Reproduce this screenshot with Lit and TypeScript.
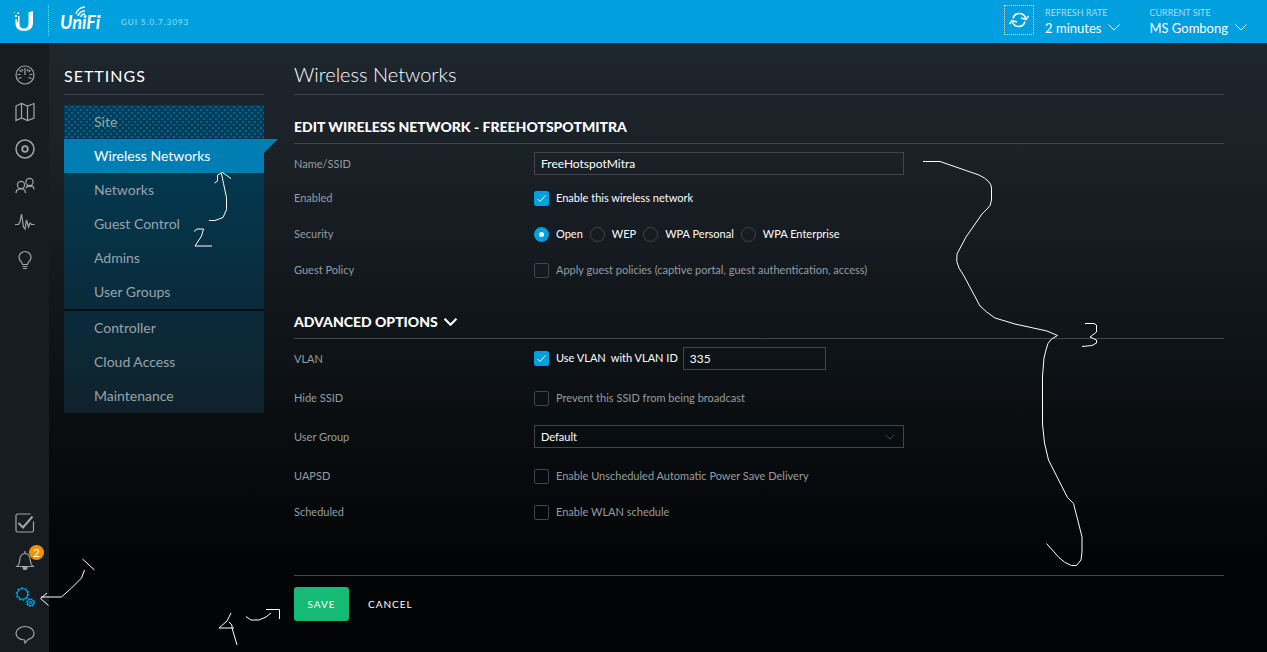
import { LitElement, html, css, svg, nothing } from "lit";
import { customElement, property, state } from "lit/decorators.js";
import { classMap } from "lit/directives/class-map.js";

const icons: Record<string, unknown> = {
  dashboard: svg`<circle cx="10" cy="10" r="9"/><path d="M10 3v7M4.500 5l2 2M15.500 5l-2 2M2.500 9.500h3M14.500 9.500h3M3.500 13.500l3-1M16.500 13.500l-3-1M7 4l.8 2M13 4l-.8 2"/>`,
  map: svg`<path d="M1 4l5.500-2.500 6 2.500 6.500-2.500V16l-6.500 2.500-6-2.500L1 18.500zM6.500 1.500V16M12.500 4v14.500"/>`,
  devices: svg`<circle cx="10" cy="10" r="9" stroke-width="1.500"/><circle cx="10" cy="10" r="2.800" stroke-width="1.800"/>`,
  clients: svg`<circle cx="6" cy="9" r="3.600"/><circle cx="14.500" cy="6" r="3.600"/><path d="M1 17c0-2 1-3.500 3-4M8 13c1.500.5 2.500 2 2.500 4M11 12.500c.5-2 1-2.500 2-3M16.500 9.500c1.500.5 2.500 2 2.500 4M3 13h6M12 10.500h6"/>`,
  pulse: svg`<path d="M0 11.500h3.500l1.500-3L6.500 1l2 13 1.500 2 1.500-9 2 7 1.500-4 1.500 1.500h3"/>`,
  insights: svg`<path d="M7.500 14.500c0-2.500-3.500-3.500-3.500-7a6 6 0 0 1 12 0c0 3.500-3.500 4.500-3.500 7zM7.500 16.500h5M8 18.500h4"/>`,
  tasks: svg`<path d="M18.500 8.500v9a1.500 1.500 0 0 1-1.500 1.500H2.500A1.500 1.500 0 0 1 1 17.500v-14A2 2 0 0 1 2.500 1h13"/><path d="M3.500 10l4.500 4.500 9.500-11" stroke-width="2"/>`,
  alerts: svg`<path d="M2 16.500c2-1.500 2.500-3 2.700-6C5 6 6.500 3.500 10 3.500s5 2.500 5.300 7c.2 3 .7 4.500 2.700 6zM10 1v2.500"/><path d="M8 17.500a2 2 0 0 0 4 0z" fill="currentColor"/>`,
  settings: svg`<circle cx="7.500" cy="7" r="5.300"/><circle cx="7.500" cy="7" r="6.300" stroke-dasharray="1.600 2.350"/><circle cx="15.500" cy="15.500" r="3"/><circle cx="15.500" cy="15.500" r="4" stroke-dasharray="1.500 1.640"/><circle cx="15.500" cy="15.500" r=".8"/>`,
  chat: svg`<path d="M9.500 16C4.500 15.800 1 13 1 9.300 1 5.500 5 2.500 10 2.500s9 3 9 6.800c0 3-2.500 5.400-6 6.400L10 19z"/>`,
};

const icon = (name: string) =>
  html`<svg class="icon" viewBox="0 0 20 20" aria-hidden="true">${icons[name]}</svg>`;

const chevron = (cls: string) =>
  html`<svg class=${cls} viewBox="0 0 12 7" aria-hidden="true"><path d="M.5 .5L6 6 11.500 .5" /></svg>`;

@customElement("unifi-header")
export class UnifiHeader extends LitElement {
  static styles = css`
    :host { display: block; }
    .bar {
      display: flex; align-items: center; height: 43px; box-sizing: border-box;
      background: #00a0df; color: #fff; padding-right: 20px;
    }
    .home { display: flex; justify-content: center; width: 48px; }
    .mark { width: 20px; height: 21px; }
    .split { align-self: stretch; margin: 5px 0 7px; border-left: 1px dotted #8fd4f0; }
    .brand { display: flex; align-items: center; flex: 1; }
    .product { width: 46px; height: 28px; margin: 0 15px 6px 11px; }
    .name { font: italic 700 18px Lato, sans-serif; fill: #fff; }
    .version { font-size: 8px; letter-spacing: 1px; color: #a6def4; }
    .refresh {
      display: flex; align-items: center; justify-content: center; width: 30px; height: 30px; box-sizing: border-box;
      margin: 0 11px 3px 0; padding: 0; background: none; border: 1px dotted #c4eaf8; color: #fff;
    }
    .refresh svg { width: 20px; height: 18px; }
    .pick {
      display: flex; flex-direction: column; align-items: flex-start; padding: 0; margin-bottom: 2px;
      border: 0; background: none; color: #fff; font: 13px/16px Lato, sans-serif; text-align: left;
    }
    .pick + .pick { margin-left: 29px; }
    .caption { font-size: 9px; line-height: 14px; color: #a6def4; }
    .value { display: flex; align-items: center; gap: 7px; }
    .down { width: 12px; height: 7px; fill: none; stroke: #fff; }
  `;

  render() {
    return html`<header class="bar">
      <div class="home">
        <svg class="mark" viewBox="0 0 20 21" role="img" aria-label="Ubiquiti" fill="#fff">
          <path d="M5.500 5v8c0 3 2 4.500 4.500 4.500 3 0 4.500-2 4.500-5V1.500L19 0v12c0 5-3.500 8-9 8s-8.500-3-8.500-7.500V8H3v3h1V5z"/>
          <path d="M0 1h1v1H0zM3 2h1v1H3zM1 4h2v2H1zM4 1h1v2H4z"/>
        </svg>
      </div>
      <div class="split"></div>
      <div class="brand">
        <svg class="product" viewBox="0 0 46 28">
          <text class="name" x="0" y="24">UniFi</text>
          <path d="M16 9c1-4 5-7 9-7M18 11c1-3 4-5 7-5M21 12c0-2 2-3 4-3" fill="none" stroke="#fff" stroke-width="1.500"/>
          <path d="M38 10l3 3M41 10l-3 3" stroke="#fff" stroke-width=".7"/>
        </svg>
        <span class="version">GUI 5.0.7.3093</span>
      </div>
      <button class="refresh" aria-label="Refresh">
        <svg viewBox="0 0 20 18" fill="none" stroke="currentColor" stroke-width="1.500">
          <path d="M4 7.500A6.500 6.500 0 0 1 16.500 7M16 10.500A6.500 6.500 0 0 1 3.500 11"/>
          <path d="M12 7l5 1.500 2.500-3.500M.5 13L3 9.500l5 1.500"/>
        </svg>
      </button>
      <button class="pick"><span class="caption">REFRESH RATE</span><span class="value">2 minutes ${chevron("down")}</span></button>
      <button class="pick"><span class="caption">CURRENT SITE</span><span class="value">MS Gombong ${chevron("down")}</span></button>
    </header>`;
  }
}

@customElement("unifi-rail")
export class UnifiRail extends LitElement {
  static styles = css`
    :host { display: block; width: 49px; background: #171c20; }
    .rail {
      display: flex; flex-direction: column; justify-content: space-between; height: 100%;
      box-sizing: border-box; padding: 13px 0 0;
    }
    .group { display: flex; flex-direction: column; }
    .link { position: relative; display: flex; align-items: center; justify-content: center; height: 37px; color: #9ba7ae; }
    .active { color: #00a0df; }
    .icon { width: 20px; height: 20px; fill: none; stroke: currentColor; stroke-width: 1.2; }
    .badge {
      position: absolute; top: 4px; right: 5px; width: 15px; height: 15px; border-radius: 50%;
      background: #f39200; color: #fff; font-size: 11px; line-height: 15px; text-align: center;
    }
  `;

  link(name: string, label: string, badge?: number) {
    return html`<a class=${classMap({ link: true, active: name === "settings" })} href="#${name}" aria-label=${label}>
      ${icon(name)}${badge ? html`<span class="badge">${badge}</span>` : nothing}
    </a>`;
  }

  render() {
    return html`<nav class="rail" aria-label="Main">
      <div class="group">
        ${this.link("dashboard", "Dashboard")}${this.link("map", "Map")}${this.link("devices", "Devices")}
        ${this.link("clients", "Clients")}${this.link("pulse", "Statistics")}${this.link("insights", "Insights")}
      </div>
      <div class="group">
        ${this.link("tasks", "Tasks")}${this.link("alerts", "Alerts", 2)}${this.link("settings", "Settings")}
        ${this.link("chat", "Chat")}
      </div>
    </nav>`;
  }
}

@customElement("settings-menu")
export class SettingsMenu extends LitElement {
  @property() current = "Wireless Networks";

  static styles = css`
    :host { display: block; width: 200px; }
    .title {
      display: flex; align-items: flex-end; height: 52px; box-sizing: border-box; margin: 0 0 10px; padding-bottom: 6px;
      border-bottom: 1px solid #3f474d; color: #fff; font-size: 16px; font-weight: 400; line-height: 24px; letter-spacing: 1px;
    }
    .menu { background: linear-gradient(#003e59, #0a2b3b 66%, #10222b); }
    .group { margin: 0; padding: 0; list-style: none; }
    .group + .group { border-top: 2px solid #070e12; }
    .item { position: relative; }
    .link {
      display: block; padding-left: 30px; color: #9aa3a9; font-size: 14px; line-height: 34px; text-decoration: none;
    }
    .dotted {
      background:
        radial-gradient(circle at 1px 1px, #006592 1px, transparent 1px) 1px 1px / 6px 6px,
        radial-gradient(circle at 1px 1px, #006592 1px, transparent 1px) 4px 4px / 6px 6px;
    }
    .active { background: #007eb3; color: #fff; }
    .active::after {
      content: ""; position: absolute; left: 100%; top: 0; width: 14px; height: 14px;
      background: #007eb3; clip-path: polygon(0 0, 100% 0, 0 100%);
    }
  `;

  group(names: string[]) {
    return html`<ul class="group">${names.map(
      (n) => html`<li class="item"><a href="#" class=${classMap({ link: true, active: n === this.current, dotted: n === "Site" })}>${n}</a></li>`
    )}</ul>`;
  }

  render() {
    return html`<h2 class="title">SETTINGS</h2>
      <nav class="menu" aria-label="Settings">
        ${this.group(["Site", "Wireless Networks", "Networks", "Guest Control", "Admins", "User Groups"])}
        ${this.group(["Controller", "Cloud Access", "Maintenance"])}
      </nav>`;
  }
}

@customElement("wlan-form")
export class WlanForm extends LitElement {
  @state() checks: Record<string, boolean> = { enabled: true, vlan: true };
  @state() security = "Open";

  static styles = css`
    :host { display: block; color: #fff; font-size: 11px; line-height: 16px; }
    .title {
      display: flex; align-items: flex-end; height: 52px; box-sizing: border-box; margin: 0; padding-bottom: 8px;
      border-bottom: 1px solid #3f474d; font-size: 20px; font-weight: 300; line-height: 24px;
    }
    .heading {
      display: flex; align-items: center; gap: 6px; margin: 22px 0 0; padding-bottom: 6px;
      border-bottom: 1px solid #3f474d; font-size: 14px; font-weight: 900; line-height: 20px;
    }
    .advanced { margin-top: 24px; }
    .more { width: 13px; height: 8px; fill: none; stroke: #fff; stroke-width: 2; }
    .rows { padding-top: 4px; }
    .row { display: grid; grid-template-columns: 240px minmax(0, 1fr); align-items: center; min-height: 36px; color: #969da1; }
    .first { min-height: 32px; }
    .roomy { padding-top: 0; }
    .roomy .row { min-height: 38px; }
    .roomy .tall { min-height: 40px; }
    .roomy .row:last-child { min-height: 34px; }
    .controls { display: flex; align-items: center; gap: 7px; color: #fff; }
    .first .controls, .tall .controls { padding-bottom: 2px; }
    .option { display: flex; align-items: center; gap: 7px; }
    .off { color: #969da1; }
    .tick {
      appearance: none; box-sizing: border-box; width: 15px; height: 15px; margin: 0; border: 1px solid #3f474d; border-radius: 2px;
    }
    .tick:checked {
      border-color: #00a0df;
      background: #00a0df url("data:image/svg+xml,%3Csvg xmlns='http://www.w3.org/2000/svg' viewBox='0 0 13 13'%3E%3Cpath d='M2.500 7l2.500 2.500L10.500 3.500' fill='none' stroke='white'/%3E%3C/svg%3E");
    }
    .dot {
      appearance: none; box-sizing: border-box; width: 15px; height: 15px; margin: 0; border: 1px solid #3f474d; border-radius: 50%;
    }
    .dot:checked { border: 5px solid #00a0df; background: #fff; }
    .field {
      box-sizing: border-box; height: 23px; width: 100%; max-width: 370px; padding: 0 6px; border: 1px solid #3f474d; border-radius: 0;
      background: transparent; color: #fff; font: 12px Lato, sans-serif; appearance: none;
    }
    select.field { font-size: 11px; }
    .field option { background: #0a0e11; }
    .small { width: 143px; }
    .vlan { gap: 5px; }
    .select { position: relative; width: 370px; max-width: 100%; display: flex; }
    .caret { position: absolute; right: 9px; top: 9px; width: 10px; height: 6px; fill: none; stroke: #4b545a; pointer-events: none; }
    .actions { display: flex; align-items: center; gap: 19px; margin-top: 46px; padding: 11px 0 31px; border-top: 1px solid #3f474d; }
    .save, .cancel { border: 0; padding: 0; background: none; color: #fff; font: 10px Lato, sans-serif; letter-spacing: 1px; }
    .save { width: 55px; height: 34px; border-radius: 3px; background: #15ba75; }
  `;

  check(id: string, text: string) {
    const on = !!this.checks[id];
    return html`<label class=${classMap({ option: true, off: !on })}>
      <input class="tick" type="checkbox" .checked=${on}
        @change=${(e: Event) => (this.checks = { ...this.checks, [id]: (e.target as HTMLInputElement).checked })} />${text}</label>`;
  }

  render() {
    return html`<h1 class="title">Wireless Networks</h1>
      <h2 class="heading">EDIT WIRELESS NETWORK - FREEHOTSPOTMITRA</h2>
      <div class="rows">
        <div class="row first"><label for="ssid">Name/SSID</label>
          <div class="controls"><input class="field" id="ssid" value="FreeHotspotMitra" /></div></div>
        <div class="row"><span>Enabled</span><div class="controls">${this.check("enabled", "Enable this wireless network")}</div></div>
        <div class="row"><span id="sec">Security</span>
          <div class="controls" role="radiogroup" aria-labelledby="sec">
            ${["Open", "WEP", "WPA Personal", "WPA Enterprise"].map(
              (n) => html`<label class="option"><input class="dot" type="radio" name="security" .checked=${n === this.security}
                @change=${() => (this.security = n)} />${n}</label>`
            )}
          </div></div>
        <div class="row"><span>Guest Policy</span><div class="controls">${this.check("guest", "Apply guest policies (captive portal, guest authentication, access)")}</div></div>
      </div>
      <h2 class="heading advanced">ADVANCED OPTIONS ${chevron("more")}</h2>
      <div class="rows roomy">
        <div class="row tall"><span>VLAN</span>
          <div class="controls vlan">${this.check("vlan", "Use VLAN")}<label for="vid">with VLAN ID</label><input class="field small" id="vid" value="335" /></div></div>
        <div class="row"><span>Hide SSID</span><div class="controls">${this.check("hide", "Prevent this SSID from being broadcast")}</div></div>
        <div class="row tall"><label for="group">User Group</label>
          <div class="controls"><span class="select"><select class="field" id="group"><option>Default</option></select>${chevron("caret")}</span></div></div>
        <div class="row"><span>UAPSD</span><div class="controls">${this.check("uapsd", "Enable Unscheduled Automatic Power Save Delivery")}</div></div>
        <div class="row"><span>Scheduled</span><div class="controls">${this.check("schedule", "Enable WLAN schedule")}</div></div>
      </div>
      <div class="actions"><button class="save">SAVE</button><button class="cancel">CANCEL</button></div>`;
  }
}

@customElement("app-root")
export class AppRoot extends LitElement {
  static styles = css`
    :host {
      position: relative; display: flex; flex-direction: column; min-height: 100vh; overflow: hidden;
      font-family: Lato, sans-serif; background: #030406;
    }
    .body { display: flex; flex: 1; background: linear-gradient(#1e262e, #1a2127 18%, #0c1013 58%, #030406 84%); }
    .menu { flex: none; margin-left: 15px; }
    .form { flex: 1; min-width: 0; margin: 0 43px 0 30px; }
    .ink { position: absolute; left: 0; top: 0; width: 1267px; height: 652px; fill: none; stroke: #fff; pointer-events: none; }
  `;

  render() {
    return html`<unifi-header></unifi-header>
      <div class="body">
        <unifi-rail></unifi-rail>
        <settings-menu class="menu"></settings-menu>
        <wlan-form class="form"></wlan-form>
      </div>
      <svg class="ink" viewBox="0 0 1267 652" aria-hidden="true">
        <path d="M82.500 559l12 11M84.500 570l-3 8-10 10-10 9H41M47 593l-6.500 5.500 8 7"/>
        <path d="M209 220.500h6l8-3 3.500-8v-12l-3-14-2-10M214.500 183l3-2v-6l5-2.500 8.500 6"/>
        <path d="M194 231.500l3-2.500h6.500l-2 7-6.500 10h17"/>
        <path d="M923 161.500H940L979 175Q991.500 181 991.500 188V200Q991 206 987 209L982 214L973 227L966 237L957 254Q955.500 262 959 268L964 276L980 306Q986 312 995 318L1015 324L1047 331L1057.500 335.500L1051.500 339Q1047 343 1046 350L1044 358L1042.500 376V424L1044.500 443L1048.500 460L1067.500 497.500L1073.500 503.500L1079 525L1082 537V552L1081 560L1076.500 565.500H1071.500Q1064 563 1059 557.500L1046.500 543.500"/>
        <path d="M1085 323.500H1094L1096.500 325V332L1090 337L1096.500 340V343L1092 345.500L1082 346.500"/>
        <path d="M231 613l-4 8-8 7h15M229 622l3 3v3l5 17"/>
        <path d="M246 616.500l5 3.500h8l7-3 5-4M266 609.500h13.500v9.500"/>
      </svg>`;
  }
}
